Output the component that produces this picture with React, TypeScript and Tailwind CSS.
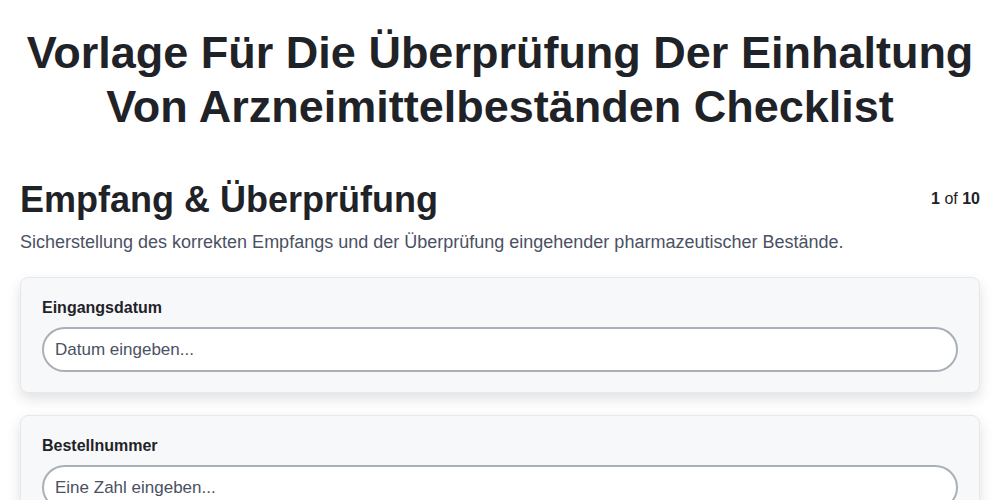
export default function App() {
  const fields = [
    { label: 'Eingangsdatum', placeholder: 'Datum eingeben...' },
    { label: 'Bestellnummer', placeholder: 'Eine Zahl eingeben...' },
  ];

  return (
    <div className="min-h-screen bg-white px-5 text-[#1f2328] font-['Liberation_Sans',Arial,sans-serif]">
      <h1 className="pt-[26px] text-center text-[45px] font-bold leading-[54px]">
        Vorlage Für Die Überprüfung Der Einhaltung Von Arzneimittelbeständen Checklist
      </h1>

      <div className="mt-[44px] flex items-start justify-between">
        <h2 className="text-[36px] font-bold leading-[44px]">Empfang &amp; Überprüfung</h2>
        <div className="pt-[9px] text-[16px]">
          <span className="font-bold">1</span> of <span className="font-bold">10</span>
        </div>
      </div>
      <p className="mt-[7px] text-[18px] leading-[26px] text-[#4a5163]">
        Sicherstellung des korrekten Empfangs und der Überprüfung eingehender pharmazeutischer Bestände.
      </p>

      <div className="mt-[22px] flex flex-col gap-[22px]">
        {fields.map((f) => (
          <div
            key={f.label}
            className="rounded-lg border border-[#e6e8ee] bg-[#f7f8fa] px-[21px] pt-[20px] pb-[20px] shadow-[0_6px_14px_rgba(0,0,0,0.12)]"
          >
            <label className="block text-[16px] font-bold leading-[20px]">{f.label}</label>
            <input
              type="text"
              placeholder={f.placeholder}
              className="mt-[9px] h-[45px] w-full rounded-full border-2 border-[#a9b0b8] bg-white px-[11px] text-[17px] text-[#1f2328] outline-none placeholder:text-[#4a5163]"
            />
          </div>
        ))}
      </div>
    </div>
  );
}
